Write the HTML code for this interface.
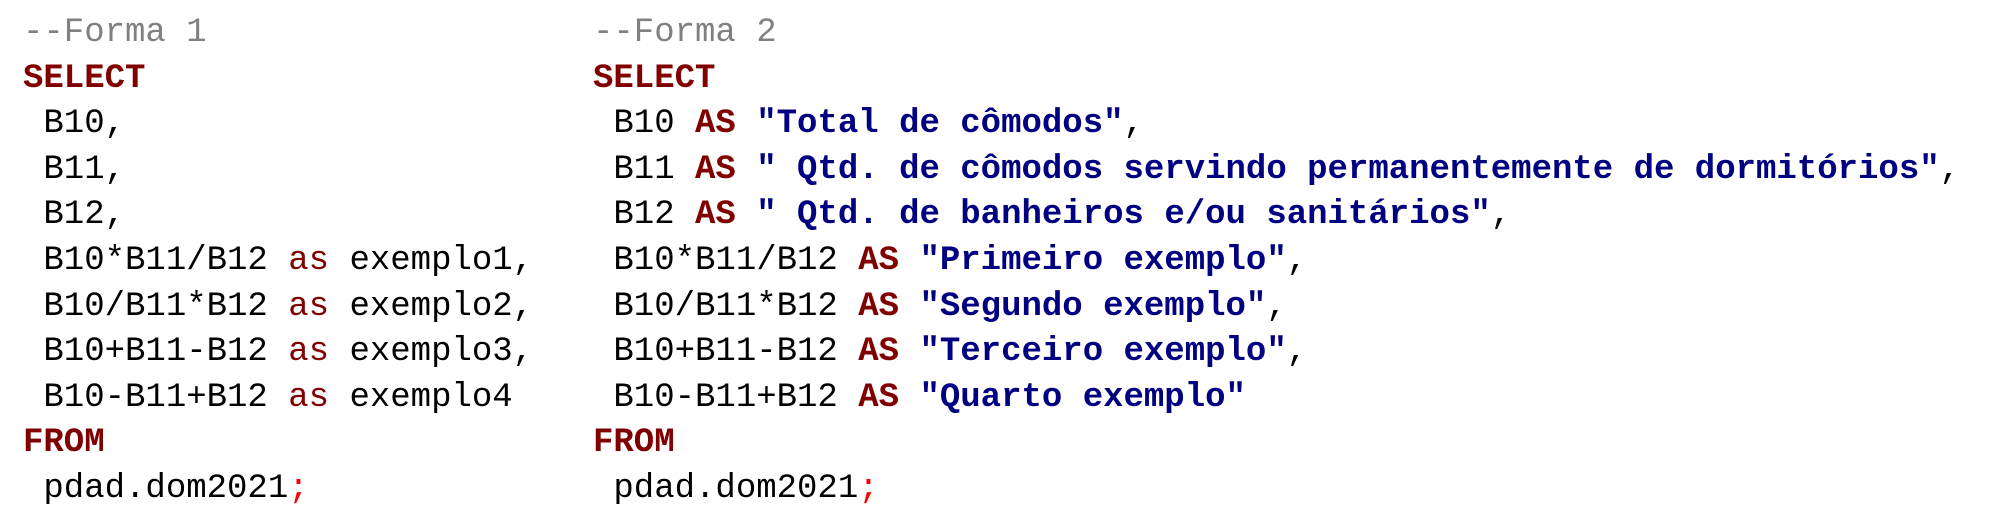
<!DOCTYPE html>
<html><head><meta charset="utf-8"><style>
html,body{margin:0;padding:0;background:#fff;width:2008px;height:530px;overflow:hidden}
pre{position:absolute;top:11px;margin:0;font-family:"Liberation Mono","DejaVu Sans Mono",monospace;font-size:34px;line-height:45.6px;color:#000}
.c{color:#808080}.k{color:#800000;font-weight:bold}.a{color:#800000}.s{color:#000080;font-weight:bold}.r{color:#ff0000}
</style></head><body>
<pre style="left:23px"><span class="c">--Forma 1</span>
<span class="k">SELECT</span>
 B10,
 B11,
 B12,
 B10*B11/B12 <span class="a">as</span> exemplo1,
 B10/B11*B12 <span class="a">as</span> exemplo2,
 B10+B11-B12 <span class="a">as</span> exemplo3,
 B10-B11+B12 <span class="a">as</span> exemplo4
<span class="k">FROM</span>
 pdad.dom2021<span class="r">;</span></pre>
<pre style="left:593px"><span class="c">--Forma 2</span>
<span class="k">SELECT</span>
 B10 <span class="k">AS</span> <span class="s">"Total de cômodos"</span>,
 B11 <span class="k">AS</span> <span class="s">" Qtd. de cômodos servindo permanentemente de dormitórios"</span>,
 B12 <span class="k">AS</span> <span class="s">" Qtd. de banheiros e/ou sanitários"</span>,
 B10*B11/B12 <span class="k">AS</span> <span class="s">"Primeiro exemplo"</span>,
 B10/B11*B12 <span class="k">AS</span> <span class="s">"Segundo exemplo"</span>,
 B10+B11-B12 <span class="k">AS</span> <span class="s">"Terceiro exemplo"</span>,
 B10-B11+B12 <span class="k">AS</span> <span class="s">"Quarto exemplo"</span>
<span class="k">FROM</span>
 pdad.dom2021<span class="r">;</span></pre>
</body></html>
